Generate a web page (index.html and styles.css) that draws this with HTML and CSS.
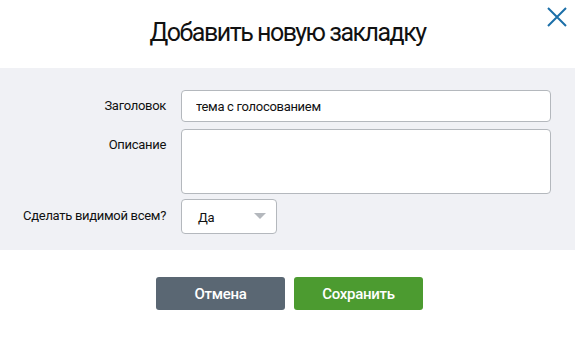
FILE: index.html
```html
<!DOCTYPE html>
<html lang="ru">
<head>
    <meta charset="UTF-8">
    <title>Добавить новую закладку</title>
    <link rel="stylesheet" href="styles.css">
</head>
<body>
    <div class="modal">
        <div class="modal-header">
            <h1 class="modal-title">Добавить новую закладку</h1>
            <button class="close-btn" type="button" aria-label="Закрыть">
                <svg width="20" height="20" viewBox="0 0 20 20">
                    <path d="M1 1 L19 19 M19 1 L1 19" stroke="#1b6fa8" stroke-width="2" fill="none"/>
                </svg>
            </button>
        </div>

        <div class="modal-body">
            <div class="form-row">
                <label class="form-label">Заголовок</label>
                <input class="form-input" type="text" value="тема с голосованием">
            </div>
            <div class="form-row">
                <label class="form-label">Описание</label>
                <textarea class="form-textarea"></textarea>
            </div>
            <div class="form-row form-row-select">
                <label class="form-label">Сделать видимой всем?</label>
                <div class="form-select">
                    <span>Да</span>
                    <span class="select-arrow"></span>
                </div>
            </div>
        </div>

        <div class="modal-footer">
            <button class="btn btn-cancel" type="button">Отмена</button>
            <button class="btn btn-save" type="button">Сохранить</button>
        </div>
    </div>
</body>
</html>
```

FILE: styles.css
```css
* {
    margin: 0;
    padding: 0;
    box-sizing: border-box;
}

body {
    background: #fff;
    font-family: 'Roboto', 'Liberation Sans', sans-serif;
    color: #111;
}

.modal {
    width: 575px;
}

.modal-header {
    height: 68px;
    display: flex;
    align-items: center;
    justify-content: center;
    position: relative;
}

.modal-title {
    font-size: 25px;
    font-weight: 400;
    letter-spacing: -1.5px;
    color: #111;
    margin-top: -3px;
}

.close-btn {
    position: absolute;
    top: 7px;
    right: 8px;
    width: 20px;
    height: 20px;
    border: none;
    background: none;
    cursor: pointer;
}

.modal-body {
    background: #f0f1f5;
    padding: 22px 24px 16px 0;
    display: flex;
    flex-direction: column;
    gap: 7px;
}

.form-row {
    display: flex;
    align-items: flex-start;
}

.form-row-select {
    margin-top: -2px;
}

.form-label {
    width: 166px;
    text-align: right;
    font-size: 13px;
    letter-spacing: -0.3px;
    color: #111;
    padding-top: 8px;
    margin-right: 15px;
}

.form-row-select .form-label {
    padding-top: 9px;
}

.form-input,
.form-textarea,
.form-select {
    display: block;
    border: 1px solid #b4b8bd;
    border-radius: 4px;
    background: #fff;
    font-family: 'Roboto', 'Liberation Sans', sans-serif;
    font-size: 13px;
    letter-spacing: -0.3px;
    color: #111;
}

.form-input {
    width: 370px;
    height: 32px;
    padding: 0 14px;
}

.form-textarea {
    width: 370px;
    height: 65px;
    resize: none;
}

.form-select {
    width: 96px;
    height: 35px;
    display: flex;
    align-items: center;
    justify-content: space-between;
    padding: 2px 10px 0 16px;
}

.select-arrow {
    width: 0;
    height: 0;
    border-left: 6px solid transparent;
    border-right: 6px solid transparent;
    border-top: 6px solid #b4b8bd;
    margin-top: -4px;
}

.modal-footer {
    display: flex;
    justify-content: center;
    gap: 9px;
    padding-top: 27px;
    padding-left: 4px;
}

.btn {
    width: 129px;
    height: 33px;
    border: none;
    border-radius: 3px;
    color: #fff;
    font-family: 'Roboto', 'Liberation Sans', sans-serif;
    font-size: 15px;
    font-weight: 500;
    letter-spacing: -0.3px;
    cursor: pointer;
}

.btn-cancel {
    background: #5a6773;
}

.btn-save {
    background: #4c9b30;
}
```
